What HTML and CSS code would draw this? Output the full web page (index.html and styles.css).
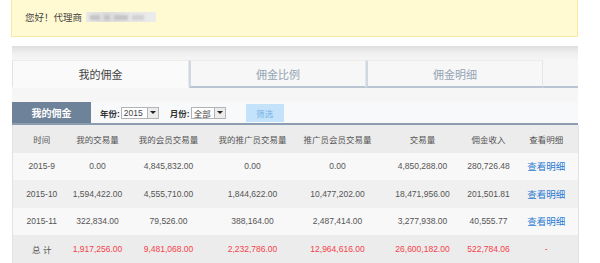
FILE: index.html
```html
<!DOCTYPE html>
<html lang="zh">
<head>
<meta charset="utf-8">
<title>我的佣金</title>
<link rel="stylesheet" href="styles.css">
</head>
<body>
<div class="notice">
  <span class="hello">您好！代理商</span>
  <span class="redact"><i class="b1"></i><i class="b2"></i><i class="b3"></i><i class="b4"></i></span>
</div>
<div class="panel">
  <div class="topbar"></div>
  <div class="tabs">
    <div class="tab active">我的佣金</div>
    <div class="tab">佣金比例</div>
    <div class="tab">佣金明细</div>
    <div class="tab-fill"></div>
  </div>
  <div class="gap"></div>
  <div class="filter">
    <div class="label">我的佣金</div>
    <span class="flabel first">年份:</span>
    <span class="select s-year"><span class="val">2015</span><span class="arrow"></span></span>
    <span class="flabel">月份:</span>
    <span class="select s-month"><span class="val">全部</span><span class="arrow"></span></span>
    <span class="btn">筛选</span>
  </div>
  <table class="grid">
    <colgroup>
      <col class="c1"><col class="c2"><col class="c3"><col class="c4"><col class="c5"><col class="c6"><col class="c7"><col class="c8">
    </colgroup>
    <thead>
      <tr><th>时间</th><th>我的交易量</th><th>我的会员交易量</th><th>我的推广员交易量</th><th>推广员会员交易量</th><th>交易量</th><th>佣金收入</th><th>查看明细</th></tr>
    </thead>
    <tbody>
      <tr class="odd"><td>2015-9</td><td>0.00</td><td>4,845,832.00</td><td>0.00</td><td>0.00</td><td>4,850,288.00</td><td>280,726.48</td><td><a class="link">查看明细</a></td></tr>
      <tr class="even"><td>2015-10</td><td>1,594,422.00</td><td>4,555,710.00</td><td>1,844,622.00</td><td>10,477,202.00</td><td>18,471,956.00</td><td>201,501.81</td><td><a class="link">查看明细</a></td></tr>
      <tr class="odd"><td>2015-11</td><td>322,834.00</td><td>79,526.00</td><td>388,164.00</td><td>2,487,414.00</td><td>3,277,938.00</td><td>40,555.77</td><td><a class="link">查看明细</a></td></tr>
      <tr class="total"><td>总 计</td><td class="red">1,917,256.00</td><td class="red">9,481,068.00</td><td class="red">2,232,786.00</td><td class="red">12,964,616.00</td><td class="red">26,600,182.00</td><td class="red">522,784.06</td><td class="red">-</td></tr>
    </tbody>
  </table>
</div>
</body>
</html>
```
FILE: styles.css
```css
html, body {
  margin: 0;
  padding: 0;
  background: #ffffff;
  font-family: "Liberation Sans", "Noto Sans CJK SC", sans-serif;
  color: #555;
}

.notice {
  box-sizing: border-box;
  margin: -1px 22px 0 11px;
  height: 38px;
  background: #fffad2;
  border: 1px solid #f6e9a6;
  display: flex;
  align-items: center;
  padding: 0 0 2px 13px;
  font-size: 9.5px;
  color: #444;
}

.redact {
  display: flex;
  align-items: center;
  margin-left: 4px;
  height: 10px;
  width: 70px;
  background: linear-gradient(90deg, #e8e8e8, #dcdcdc 30%, #e6e6e6 60%, #ececec);
}
.redact i {
  display: block;
  height: 5px;
  background: #c4c4c4;
  margin-right: 4px;
  filter: blur(1px);
}
.redact .b1 { width: 10px; margin-left: 4px; }
.redact .b2 { width: 6px; }
.redact .b3 { width: 14px; }
.redact .b4 { width: 12px; background: #d2d2d2; }

.panel {
  margin: 9px 22px 0 12px;
  width: 566px;
}

.topbar {
  height: 14px;
  background: linear-gradient(#dedede, #efefef 50%, #f5f5f5);
}

.tabs {
  display: flex;
  height: 28px;
  background: #f6f6f6;
}
.tab {
  box-sizing: border-box;
  width: 177px;
  display: flex;
  align-items: center;
  justify-content: center;
  font-size: 11px;
  color: #94a3b4;
  background: #f7f7f7;
  border: 1px solid #e3e6ea;
  border-top-color: #ececec;
  border-bottom: 2px solid #b9c5d2;
}
.tab + .tab { border-left: 2px solid #d0d8e1; }
.tab.active {
  color: #444;
  background: #fafafa;
  border-bottom-color: transparent;
  border-left-color: #dfe3e8;
}
.tab-fill {
  flex: 1;
  border-bottom: 2px solid #b9c5d2;
}

.gap {
  height: 14px;
  background: #f6f6f7;
}

.filter {
  display: flex;
  align-items: center;
  height: 21px;
  background: #f8f9fb;
  border-bottom: 2px solid #8c9db1;
  font-size: 8.5px;
}
.label {
  align-self: stretch;
  width: 79px;
  background: #6e8399;
  color: #fff;
  font-weight: bold;
  font-size: 10px;
  display: flex;
  align-items: center;
  justify-content: center;
}
.flabel {
  color: #333;
  font-weight: bold;
  margin-left: 11px;
  margin-right: 1px;
}
.flabel.first { margin-left: 9px; }
.select {
  box-sizing: border-box;
  display: flex;
  align-items: stretch;
  height: 12px;
  background: #fff;
  border: 1px solid #b4b4b4;
  color: #444;
}
.s-year { width: 38px; }
.s-month { width: 35px; margin-right: 20px; }
.select .val {
  flex: 1;
  display: flex;
  align-items: center;
  padding-left: 2px;
  font-size: 8.5px;
}
.select .arrow {
  width: 10px;
  border-left: 1px solid #b4b4b4;
  background: #ececec;
  position: relative;
}
.select .arrow::after {
  content: "";
  position: absolute;
  left: 2px;
  top: 3px;
  border-left: 3px solid transparent;
  border-right: 3px solid transparent;
  border-top: 3px solid #222;
}
.btn {
  width: 38px;
  height: 18px;
  background: #c4e3fb;
  color: #72b1e3;
  display: flex;
  align-items: center;
  justify-content: center;
  font-size: 8.5px;
}

.grid {
  width: 566px;
  border-collapse: collapse;
  table-layout: fixed;
  font-size: 8.5px;
  color: #555;
  border-left: 1px solid #dfe3e8;
  border-right: 1px solid #dfe3e8;
}
.grid col.c1 { width: 58px; }
.grid col.c2 { width: 54px; }
.grid col.c3 { width: 88px; }
.grid col.c4 { width: 80px; }
.grid col.c5 { width: 90px; }
.grid col.c6 { width: 80px; }
.grid col.c7 { width: 52px; }
.grid col.c8 { width: 64px; }
.grid th, .grid td {
  height: 27.5px;
  padding: 0;
  text-align: center;
  font-weight: normal;
  white-space: nowrap;
}
.grid thead tr { background: #ececec; }
.grid tr.odd { background: #f8f8f8; }
.grid tr.even { background: #f0f0f0; }
.grid tr.total { background: #ececec; }
.grid .red { color: #f4424a; }
.link { color: #2b7bd4; font-size: 9.5px; }
```
